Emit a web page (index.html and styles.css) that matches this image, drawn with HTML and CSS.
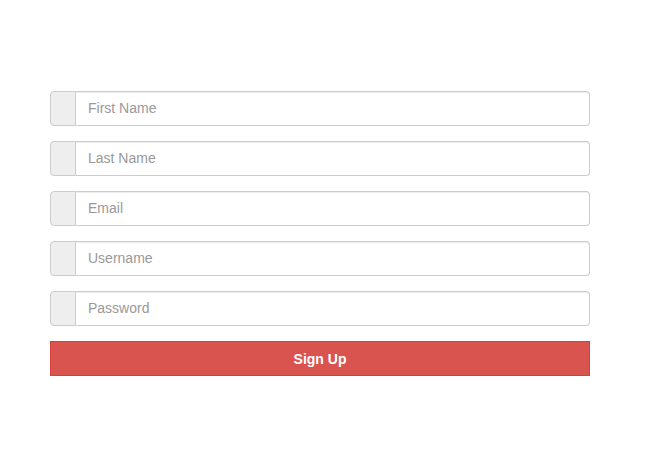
FILE: index.html
```html
<!DOCTYPE html>
<html>
<head>
<meta charset="utf-8">
<link rel="stylesheet" href="styles.css">
</head>
<body>
<form class="signup">
  <div class="input-group"><span class="addon"></span><input class="field" type="text" placeholder="First Name"></div>
  <div class="input-group"><span class="addon"></span><input class="field" type="text" placeholder="Last Name"></div>
  <div class="input-group"><span class="addon"></span><input class="field" type="text" placeholder="Email"></div>
  <div class="input-group"><span class="addon"></span><input class="field" type="text" placeholder="Username"></div>
  <div class="input-group"><span class="addon"></span><input class="field" type="password" placeholder="Password"></div>
  <button class="btn-danger" type="button">Sign Up</button>
</form>
</body>
</html>
```
FILE: styles.css
```css
html, body {
  margin: 0;
  padding: 0;
  background: #fff;
}
body {
  font-family: "Liberation Sans", Arial, sans-serif;
  font-size: 14px;
  color: #333;
}
.signup {
  width: 540px;
  margin: 91px 0 0 50px;
  display: flex;
  flex-direction: column;
  gap: 15px;
}
.input-group {
  display: flex;
  height: 35px;
}
.addon {
  box-sizing: border-box;
  width: 26px;
  height: 35px;
  background: #eee;
  border: 1px solid #ccc;
  border-radius: 4px 0 0 4px;
  flex: none;
}
.field {
  box-sizing: border-box;
  flex: 1;
  height: 35px;
  margin: 0;
  padding: 5px 12px 7px;
  border: 1px solid #ccc;
  border-left: 0;
  border-radius: 0 4px 4px 0;
  font-family: "Liberation Sans", Arial, sans-serif;
  font-size: 14px;
  color: #555;
  outline: none;
  box-shadow: inset 0 1px 1px rgba(0,0,0,0.075);
}
.field::placeholder {
  color: #999;
  opacity: 1;
}
.btn-danger {
  box-sizing: border-box;
  height: 35px;
  width: 100%;
  margin: 0;
  padding: 6px 12px;
  background: #d9534f;
  border: 1px solid #d43f3a;
  border-radius: 0;
  color: #fff;
  font-family: "Liberation Sans", Arial, sans-serif;
  font-size: 14px;
  font-weight: bold;
  cursor: pointer;
}
```
